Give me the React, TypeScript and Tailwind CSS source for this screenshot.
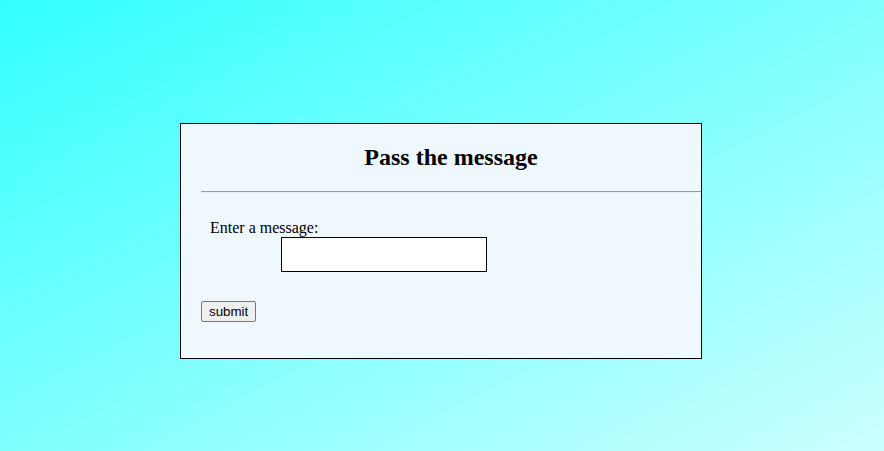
const App = () => {
  return (
    <div className="min-h-screen w-full bg-[linear-gradient(to_bottom_right,#33ffff,#ccffff)] pt-[123px] pl-[180px] font-['Liberation_Serif',serif] text-black">
      <div className="w-[522px] h-[236px] border border-black bg-[#f0f8ff] pl-5">
        <h2 className="mt-[19px] mb-5 text-center text-2xl font-bold leading-[28px]">
          Pass the message
        </h2>
        <hr className="border-0 border-t border-t-[#9a9a9a] border-b border-b-[#eeeeee]" />
        <form className="mt-[26px]" onSubmit={(e) => e.preventDefault()}>
          <label className="block">
            <span className="block ml-[9px] text-base leading-[18px]">Enter a message:</span>
            <input
              type="text"
              className="block ml-[80px] w-[206px] h-[35px] border border-black bg-white outline-none"
            />
          </label>
          <button
            type="submit"
            className="mt-[29px] h-[21px] px-[7px] border border-[#767676] rounded-[2px] bg-[#efefef] font-['Liberation_Sans',sans-serif] text-[13.33px] leading-[17px]"
          >
            submit
          </button>
        </form>
      </div>
    </div>
  );
};

export default App;
